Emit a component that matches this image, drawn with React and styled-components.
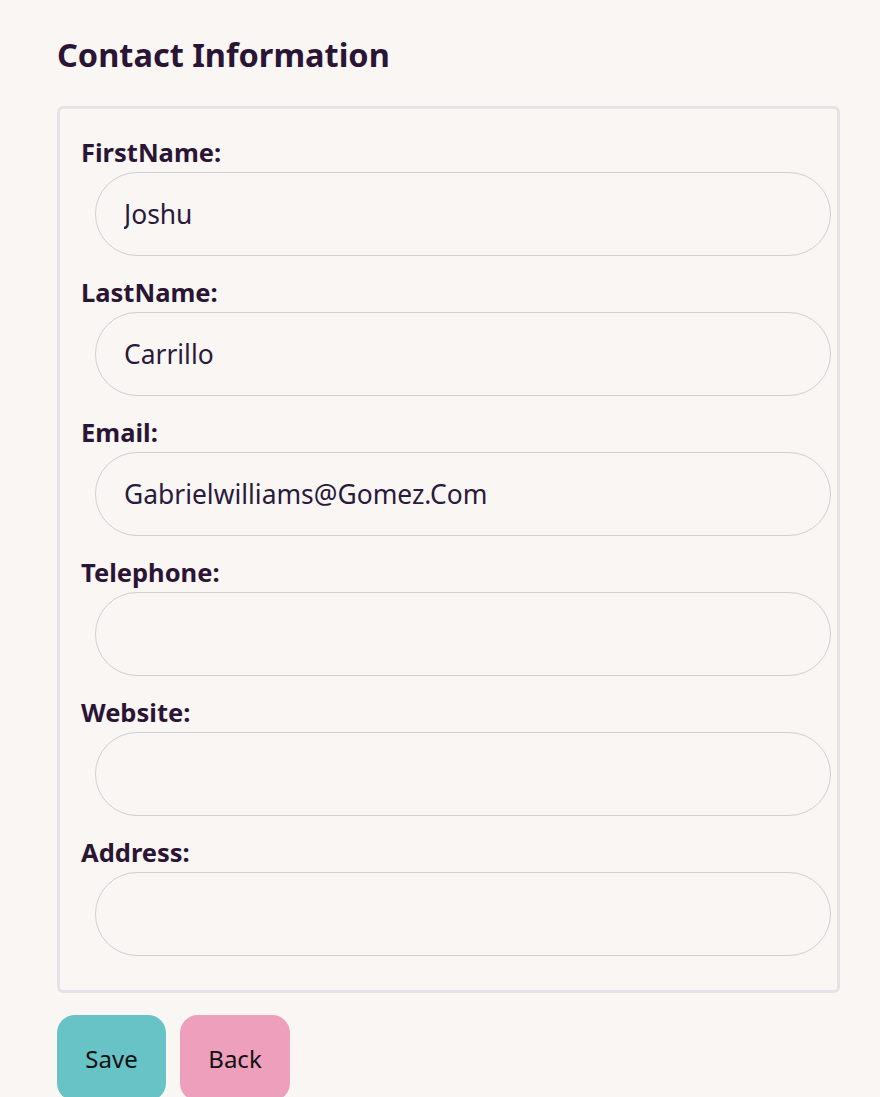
import React from 'react';
import styled, { createGlobalStyle } from 'styled-components';

const GlobalStyle = createGlobalStyle`
  body {
    margin: 0;
    background: #faf6f4;
    font-family: 'Noto Sans', 'Open Sans', sans-serif;
    color: #2a1535;
  }
`;

const Page = styled.div`
  padding: 30px 40px 0 57px;
`;

const Title = styled.h2`
  font-size: 32.5px;
  font-weight: 700;
  color: #2a1535;
  margin: 0 0 26px;
  line-height: 50px;
`;

const Card = styled.form`
  width: 783px;
  box-sizing: border-box;
  border: 3px solid #e4e4e8;
  border-radius: 6px;
  padding: 27px 6px 34px 21px;
  display: flex;
  flex-direction: column;
  gap: 20px;
`;

const Field = styled.div`
  display: flex;
  flex-direction: column;
`;

const Label = styled.label`
  font-size: 25.5px;
  font-weight: 700;
  line-height: 32px;
  margin-bottom: 4px;
`;

const Input = styled.input`
  margin-left: 14px;
  height: 84px;
  box-sizing: border-box;
  border: 1px solid #d3cdd0;
  border-radius: 42px;
  background: transparent;
  padding: 0 28px;
  font-family: inherit;
  font-size: 26.4px;
  color: #2a1a3c;
  outline: none;
`;

const Actions = styled.div`
  display: flex;
  gap: 14px;
  margin-top: 22px;
`;

const Button = styled.button`
  width: ${(p) => p.$w}px;
  height: 86px;
  border: none;
  border-radius: 18px;
  background: ${(p) => p.$bg};
  font-family: inherit;
  font-size: 24px;
  color: #111;
  cursor: pointer;
`;

const fields = [
  { label: 'FirstName:', value: 'Joshu' },
  { label: 'LastName:', value: 'Carrillo' },
  { label: 'Email:', value: 'Gabrielwilliams@Gomez.Com' },
  { label: 'Telephone:', value: '' },
  { label: 'Website:', value: '' },
  { label: 'Address:', value: '' },
];

export default function App() {
  return (
    <>
      <GlobalStyle />
      <Page>
        <Title>Contact Information</Title>
        <Card>
          {fields.map(({ label, value }) => (
            <Field key={label}>
              <Label>{label}</Label>
              <Input defaultValue={value} />
            </Field>
          ))}
        </Card>
        <Actions>
          <Button $bg="#67c3c6" $w={109}>Save</Button>
          <Button $bg="#ee9fbb" $w={110}>Back</Button>
        </Actions>
      </Page>
    </>
  );
}
